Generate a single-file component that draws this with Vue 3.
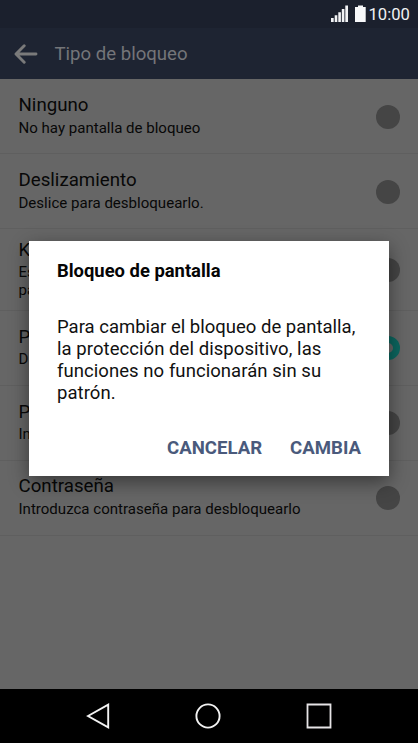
<script setup>
const options = [
  { title: 'Ninguno', detail: 'No hay pantalla de bloqueo', size: 'row-75' },
  { title: 'Deslizamiento', detail: 'Deslice para desbloquearlo.', size: 'row-75' },
  { title: 'K', detail: 'Es\npa', size: 'row-tall' },
  { title: 'P', detail: 'D', size: 'row-75 row-low', selected: true },
  { title: 'P', detail: 'In', size: 'row-75 row-low' },
  { title: 'Contraseña', detail: 'Introduzca contraseña para desbloquearlo', size: 'row-last' },
]
</script>

<template>
  <div class="phone">
    <div class="status">
      <svg class="status-icons" width="36" height="18" viewBox="0 0 36 18">
        <path d="M0 13h2.7v4H0zM3.7 10.3h2.6V17H3.7zM7.3 7.3h2.6V17H7.3zM10.8 4h2.6v13h-2.6zM14.3 0.5H17V17h-2.7z" fill="#f2f3f5" />
        <path d="M24 2h3V0.4h5V2h2.7v15H24z" fill="#f7f8fa" />
      </svg>
      <span class="clock">10:00</span>
    </div>
    <header class="bar">
      <svg width="24" height="22" viewBox="0 0 24 22">
        <path d="M10.2 2.7L2 11l8.2 8.3M2.5 11H22" fill="none" stroke="#7a7a7a" stroke-width="2.9" stroke-linecap="round" stroke-linejoin="round" />
      </svg>
      <h1>Tipo de bloqueo</h1>
    </header>
    <main class="list">
      <div v-for="(o, i) in options" :key="i" class="row" :class="o.size">
        <div class="texts">
          <div class="title">{{ o.title }}</div>
          <div class="detail">{{ o.detail }}</div>
        </div>
        <span class="radio" :class="{ on: o.selected }"></span>
      </div>
    </main>
    <nav class="nav">
      <svg width="26" height="28" viewBox="0 0 26 28"><path d="M3 14L23.2 2.7V25.3Z" fill="none" stroke="#f2f2f2" stroke-width="1.9" /></svg>
      <svg width="28" height="28" viewBox="0 0 28 28"><circle cx="14" cy="14" r="11.6" fill="none" stroke="#f2f2f2" stroke-width="1.9" /></svg>
      <svg width="28" height="28" viewBox="0 0 28 28"><path d="M2.5 2.5h23v23h-23z" fill="none" stroke="#e6e4e6" stroke-width="1.8" /></svg>
    </nav>
    <section class="dialog">
      <h2>Bloqueo de pantalla</h2>
      <p>Para cambiar el bloqueo de pantalla,<br /><span class="wide">la protección del dispositivo, las<br />funciones no funcionarán sin su<br />patrón.</span></p>
      <div class="actions">
        <button>CANCELAR</button>
        <button>CAMBIA</button>
      </div>
    </section>
  </div>
</template>

<style>
body { background: #000; overflow: hidden; }
</style>

<style scoped>
.phone { position: relative; width: 418px; height: 743px; display: flex; flex-direction: column; overflow: hidden; background: #666; font-family: Roboto, "Liberation Sans", sans-serif; color: #080808; }
.status { flex: none; height: 28px; box-sizing: border-box; padding: 0 8px 0 331px; display: flex; align-items: center; background: #1b202d; color: #f0f1f3; }
.status-icons { flex: none; margin-top: 0; }
.clock { margin-left: 1.5px; font-size: 16.6px; line-height: 28px; padding-top: 2px; box-sizing: border-box; }
.bar { flex: none; height: 51px; box-sizing: border-box; padding: 0 0 0 13.5px; display: flex; align-items: center; gap: 17px; background: #1e2432; }
.bar h1 { margin: 0; padding-top: 1px; font-size: 18.6px; font-weight: 400; color: #747579; line-height: 24px; }
.list { flex: 1; min-height: 0; }
.row { box-sizing: border-box; padding: 14px 18px 0 18.5px; display: flex; justify-content: space-between; border-bottom: 1px solid #5f5f5f; }
.row-75 { height: 75px; }
.row-tall { height: 82px; padding-top: 9px; }
.row-last { height: 75px; padding-top: 13px; }
.title { font-size: 18.7px; line-height: 24px; }
.detail { font-size: 15.05px; line-height: 17px; padding-top: 3px; white-space: pre; }
.row-tall .detail { line-height: 17.5px; padding-top: 2px; }
.row-low .detail { padding-top: 2px; }
.radio { width: 24px; height: 24px; margin-top: 11.5px; border-radius: 50%; background: #454545; box-sizing: border-box; }
.row-tall .radio { margin-top: 19.5px; }
.row-low .radio { margin-top: 11px; }
.radio.on { background: #666; border: 7px solid #0c665f; }
.nav { flex: none; height: 54px; box-sizing: border-box; padding: 0 85px 0 85px; display: flex; align-items: center; justify-content: space-between; background: #000; }
.dialog { position: absolute; left: 29px; top: 241px; width: 360px; height: 235px; box-sizing: border-box; padding: 18px 28px 0; background: #fff; color: #111; box-shadow: 0 6px 18px rgba(0, 0, 0, .45); }
.dialog h2 { margin: 0; font-size: 18.4px; line-height: 24px; font-weight: 700; color: #050505; }
.dialog p { margin: 33px 0 0; font-size: 18.5px; line-height: 22px; white-space: nowrap; }
.wide { letter-spacing: 0.06px; }
.actions { display: flex; justify-content: flex-end; gap: 28px; margin-top: 33px; }
.actions button { padding: 0; border: 0; background: none; font: 700 18.6px/22px Roboto, "Liberation Sans", sans-serif; color: #4a5a7c; }
</style>
